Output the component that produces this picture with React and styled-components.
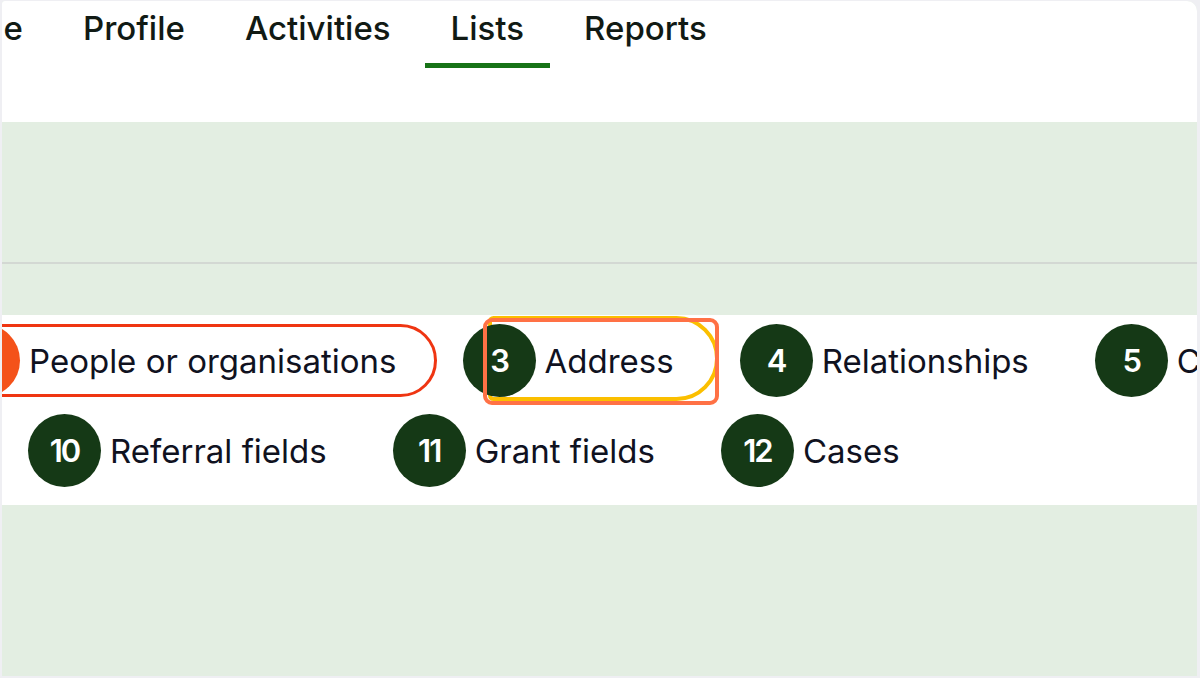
import React from 'react';
import styled, { createGlobalStyle, css } from 'styled-components';

const GlobalStyle = createGlobalStyle`
  html, body {
    margin: 0;
    padding: 0;
    background: #efeff3;
  }
  * {
    box-sizing: border-box;
  }
`;

const Frame = styled.div`
  width: 1200px;
  height: 678px;
  padding: 1px 3px 2px 2px;
  background: #efeff3;
  font-family: Inter, 'Noto Sans', sans-serif;
`;

const Window = styled.div`
  height: 100%;
  display: flex;
  flex-direction: column;
  overflow: hidden;
  border-radius: 3px 10px 0 0;
  background: #e3eee2;
`;

const Nav = styled.nav`
  height: 121px;
  flex-shrink: 0;
  background: #ffffff;
  display: flex;
  align-items: flex-start;
  gap: 8px;
`;

const Tab = styled.a`
  display: flex;
  align-items: flex-start;
  height: 67px;
  padding: 8px 26px 0;
  font-size: 33px;
  line-height: 38px;
  font-weight: 500;
  color: #111a14;
  white-space: nowrap;
  border-bottom: 5px solid
    ${(p) => (p.$active ? '#177317' : 'transparent')};

  ${(p) =>
    p.$clipped &&
    css`
      width: 47px;
      padding-left: 0;
      justify-content: flex-end;
      overflow: hidden;
    `}
`;

const Banner = styled.section`
  height: 193px;
  flex-shrink: 0;
  padding-top: 140px;
`;

const Divider = styled.hr`
  margin: 0;
  border: none;
  height: 2px;
  background: #d3d8d3;
`;

const Steps = styled.section`
  flex-shrink: 0;
  background: #ffffff;
  padding: 9px 0 18px;
  display: flex;
  flex-direction: column;
  gap: 17px;
  overflow: hidden;
`;

const StepRow = styled.div`
  display: flex;
  flex-wrap: nowrap;
  gap: 26px;
  margin-left: ${(p) => p.$offset}px;
`;

const Step = styled.a`
  position: relative;
  flex-shrink: 0;
  display: inline-flex;
  align-items: center;
  height: 73px;
  padding-right: 37px;
  border: 3px solid ${(p) => (p.$active ? '#ef3512' : 'transparent')};
  border-radius: 40px;
  white-space: nowrap;

  ${(p) =>
    p.$focused &&
    css`
      &::before {
        content: '';
        position: absolute;
        left: 22px;
        top: -11px;
        right: -8px;
        bottom: -7px;
        border: 4px solid #fbbf00;
        border-radius: 6px 46px 46px 6px;
      }
    `}
`;

const Circle = styled.span`
  position: relative;
  z-index: 1;
  width: 73px;
  height: 73px;
  margin: -3px 0 -3px -3px;
  border-radius: 50%;
  background: ${(p) => (p.$active ? '#f4521a' : '#153916')};
  color: #ffffff;
  display: flex;
  align-items: center;
  justify-content: center;
  font-size: 31px;
  font-weight: 600;
  letter-spacing: -2px;
`;

const Label = styled.span`
  margin-left: 9px;
  font-size: 33px;
  font-weight: 400;
  color: #10121f;
`;

const Highlight = styled.span`
  position: absolute;
  z-index: 2;
  left: 17px;
  top: -9px;
  width: 236px;
  height: 87px;
  border: 4px solid #ff7145;
  border-radius: 9px;
  pointer-events: none;
`;

const Rest = styled.div`
  flex: 1;
`;

const tabs = [
  { id: 'home', title: 'Home', clipped: true },
  { id: 'profile', title: 'Profile' },
  { id: 'activities', title: 'Activities' },
  { id: 'lists', title: 'Lists', active: true },
  { id: 'reports', title: 'Reports' },
];

const firstRow = [
  { n: 2, title: 'People or organisations', active: true },
  { n: 3, title: 'Address', focused: true },
  { n: 4, title: 'Relationships' },
  { n: 5, title: 'Contact details' },
];

const secondRow = [
  { n: 10, title: 'Referral fields' },
  { n: 11, title: 'Grant fields' },
  { n: 12, title: 'Cases' },
];

const StepItem = ({ step }) => (
  <Step $active={step.active} $focused={step.focused}>
    <Circle $active={step.active}>{step.n}</Circle>
    <Label>{step.title}</Label>
    {step.focused && <Highlight />}
  </Step>
);

const App = () => {
  return (
    <Frame>
      <GlobalStyle />
      <Window>
        <Nav>
          {tabs.map((tab) => (
            <Tab key={tab.id} $active={tab.active} $clipped={tab.clipped}>
              {tab.title}
            </Tab>
          ))}
        </Nav>
        <Banner>
          <Divider />
        </Banner>
        <Steps>
          <StepRow $offset={-55}>
            {firstRow.map((step) => (
              <StepItem key={step.n} step={step} />
            ))}
          </StepRow>
          <StepRow $offset={26}>
            {secondRow.map((step) => (
              <StepItem key={step.n} step={step} />
            ))}
          </StepRow>
        </Steps>
        <Rest />
      </Window>
    </Frame>
  );
};

export default App;
